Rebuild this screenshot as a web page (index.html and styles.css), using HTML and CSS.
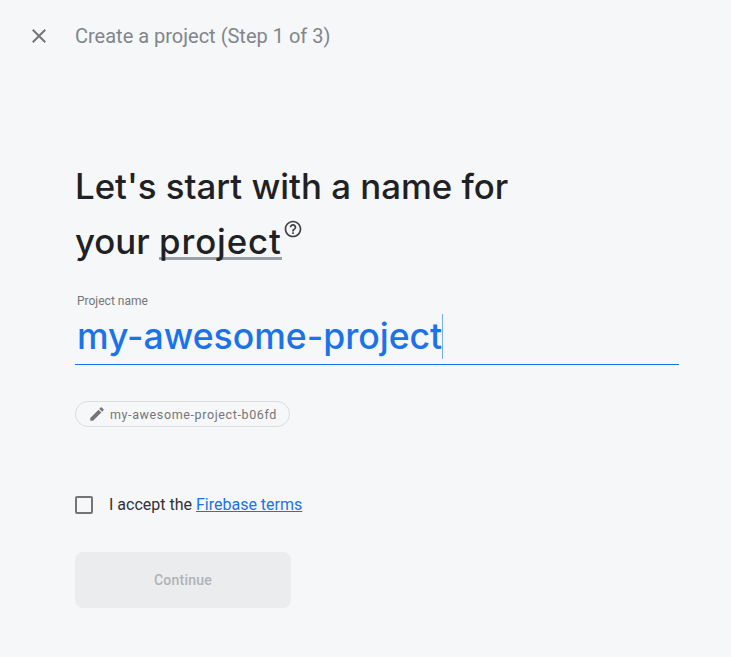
FILE: index.html
```html
<!DOCTYPE html>
<html lang="en">
<head>
  <meta charset="UTF-8" />
  <title>Create a project</title>
  <link rel="stylesheet" href="styles.css">
</head>
<body>
  <header class="topbar">
    <svg class="close" width="24" height="24" viewBox="0 0 24 24"><path d="M19 6.41 17.59 5 12 10.59 6.41 5 5 6.41 10.59 12 5 17.59 6.41 19 12 13.41 17.59 19 19 17.59 13.41 12z"/></svg>
    <span class="step">Create a project (Step 1 of 3)</span>
  </header>

  <main class="content">
    <h1 class="title">Let's start with a name for<br>your <span class="term">project</span><svg class="help" width="20" height="20" viewBox="0 0 24 24"><path d="M12 2C6.48 2 2 6.48 2 12s4.48 10 10 10 10-4.48 10-10S17.52 2 12 2zm0 18c-4.41 0-8-3.59-8-8s3.59-8 8-8 8 3.59 8 8-3.59 8-8 8zm-1-4h2v2h-2zm1-10c-2.21 0-4 1.79-4 4h2c0-1.1.9-2 2-2s2 .9 2 2c0 2-3 1.75-3 5h2c0-2.25 3-2.5 3-5 0-2.21-1.79-4-4-4z"/></svg></h1>

    <div class="field">
      <div class="field-label">Project name</div>
      <div class="field-value"><span class="value-text">my-awesome-project</span><span class="caret"></span></div>
    </div>

    <div class="chip">
      <svg width="18" height="18" viewBox="0 0 24 24"><path d="M3 17.25V21h3.75L17.81 9.94l-3.75-3.75L3 17.25zM20.71 7.04a1 1 0 0 0 0-1.41l-2.34-2.34a1 1 0 0 0-1.41 0l-1.83 1.83 3.75 3.75 1.83-1.83z"/></svg>
      <span>my-awesome-project-b06fd</span>
    </div>

    <div class="terms">
      <span class="checkbox"></span>
      <span>I accept the <a href="#">Firebase terms</a></span>
    </div>

    <button class="continue" type="button" disabled>Continue</button>
  </main>
</body>
</html>
```

FILE: styles.css
```css
body {
  margin: 0;
  background: #f6f7f9;
  font-family: Roboto, "Liberation Sans", sans-serif;
  color: #202124;
}
.topbar {
  display: flex;
  align-items: center;
  height: 72px;
  padding-left: 27px;
}
.close {
  fill: #757575;
}
.step {
  margin-left: 24px;
  font-size: 20px;
  color: #80868b;
}
.content {
  padding: 0 52px 0 75px;
}
.title {
  margin: 87px 0 0;
  font-family: Inter, sans-serif;
  font-size: 34.8px;
  font-weight: 500;
  line-height: 55px;
}
.term {
  border-bottom: 3px solid #9aa0a6;
  line-height: 32px;
  letter-spacing: 0.9px;
  display: inline-block;
}
.help {
  fill: #3c4043;
  vertical-align: 15px;
  margin-left: 1px;
}
.field {
  margin-top: 25px;
  border-bottom: 1px solid #1a73e8;
}
.field-label {
  padding-left: 2px;
  font-size: 12px;
  line-height: 14px;
  color: #757575;
}
.field-value {
  display: flex;
  align-items: center;
  height: 56px;
  padding-left: 2px;
  font-family: Inter, sans-serif;
  font-size: 35.6px;
  font-weight: 500;
  color: #1a73e8;
}
.caret {
  width: 1px;
  height: 45px;
  background: #7baaf0;
}
.chip {
  display: inline-flex;
  align-items: center;
  gap: 4px;
  height: 24px;
  margin-top: 36px;
  padding: 0 12px;
  border: 1px solid #dadce0;
  border-radius: 13px;
  font-size: 12.5px;
  letter-spacing: 0.62px;
  color: #757575;
}
.chip svg {
  fill: #757575;
}
.terms {
  display: flex;
  align-items: center;
  gap: 16px;
  margin-top: 68px;
  font-size: 16px;
  color: #303134;
}
.terms a {
  color: #1a73e8;
}
.checkbox {
  width: 14px;
  height: 14px;
  border: 2px solid #757575;
  border-radius: 2px;
}
.continue {
  display: block;
  width: 216px;
  height: 56px;
  margin-top: 38px;
  border: 0;
  border-radius: 8px;
  background: #ebecee;
  font-family: Roboto, sans-serif;
  font-size: 14px;
  font-weight: 500;
  letter-spacing: 0.25px;
  color: #b0b3b6;
}
```
